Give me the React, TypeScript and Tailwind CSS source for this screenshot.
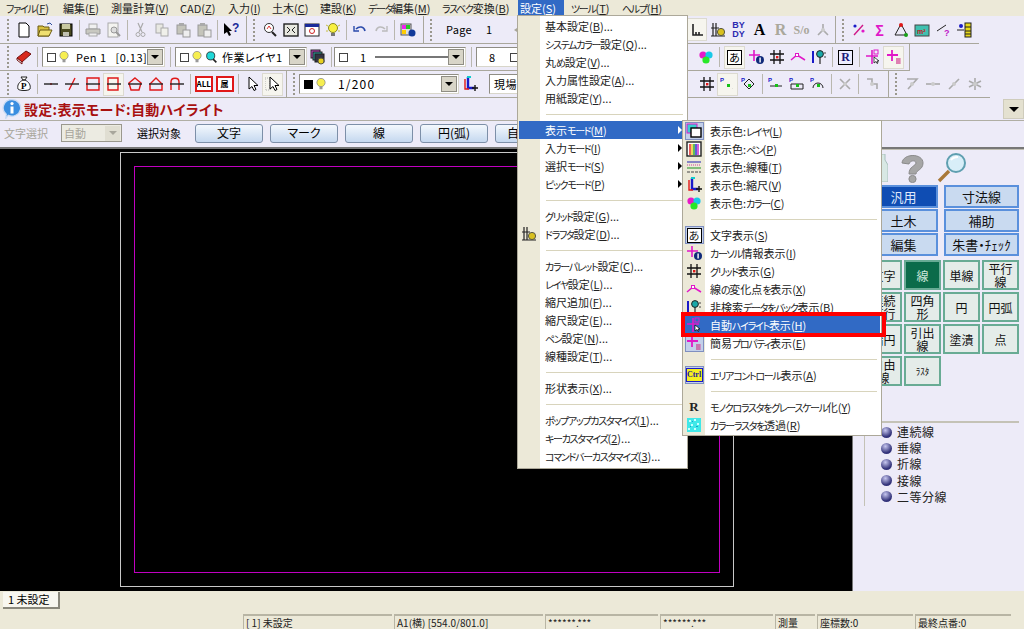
import type { ReactNode } from 'react'

const S = ({ children, size = 16 }: { children: ReactNode; size?: number }) => (
  <svg width={size} height={size} viewBox="0 0 16 16" className="shrink-0">
    {children}
  </svg>
)

const Btn = ({ children, active = false }: { children?: ReactNode; active?: boolean }) => (
  <div
    className={`w-[21px] h-[23px] shrink-0 flex items-center justify-center ${
      active ? 'bg-[#f6f5ee] border border-[#dcdad0]' : ''
    }`}
  >
    {children}
  </div>
)

const Sep = () => (
  <div className="w-[6px] h-[20px] shrink-0 flex justify-center">
    <div className="w-[1px] h-full bg-[#b9b7ae]" />
  </div>
)

const Grip = () => (
  <div className="w-[12px] h-[22px] shrink-0 flex justify-center">
    <div className="w-[2px] h-full border-l-2 border-dotted border-[#9a988e] ml-[1px]" />
  </div>
)

const Combo = ({ children, w }: { children: ReactNode; w: string }) => (
  <div
    className={`${w} h-[20px] shrink-0 flex items-center bg-white border border-[#8f8d84] border-b-[#d8d6ca] border-r-[#d8d6ca] text-[11px] tracking-[0.5px]`}
  >
    <div className="flex-1 flex items-center gap-[2px] pl-[4px] min-w-0 whitespace-nowrap overflow-hidden">{children}</div>
    <div className="w-[16px] h-[16px] mr-[1px] shrink-0 bg-[#d8d5c8] border border-[#8f8d84] flex items-center justify-center">
      <div className="w-0 h-0 border-x-[4px] border-x-transparent border-t-[4px] border-t-black" />
    </div>
  </div>
)

// toolbar glyphs
const Box = () => <div className="w-[9px] h-[9px] border border-[#444] bg-white shrink-0" />
const Bulb = () => (
  <S size={12}>
    <circle cx="8" cy="6" r="5.5" fill="#f6ee50" stroke="#888" />
    <rect x="6" y="11" width="4" height="4" fill="#999" />
  </S>
)
const New = () => <S><path d="M3 1h7l3 3v11H3z" fill="#fff" stroke="#000" /></S>
const Open = () => (
  <S>
    <path d="M1 4h5l1 1h5v9H1z" fill="#d8c040" stroke="#6a5a10" />
    <path d="M3 8h12l-3 6H1z" fill="#f0e070" stroke="#6a5a10" />
    <path d="M10 2l3-1 2 2" fill="none" stroke="#2a4a9a" />
  </S>
)
const Save = () => (
  <S>
    <rect x="2" y="2" width="12" height="12" fill="#4a4a20" stroke="#000" />
    <rect x="4" y="2" width="8" height="5" fill="#c8c8a0" />
    <rect x="5" y="10" width="6" height="4" fill="#c0c0b0" />
  </S>
)
const Print = () => (
  <S>
    <rect x="4" y="2" width="8" height="5" fill="#f0f0f0" stroke="#aaa" />
    <path d="M1 7h14v5H1z" fill="#c8c8c0" stroke="#999" />
    <rect x="4" y="11" width="8" height="3" fill="#eee" stroke="#aaa" />
  </S>
)
const Preview = () => (
  <S>
    <rect x="2" y="1" width="10" height="14" fill="#f4f4f0" stroke="#aaa" />
    <circle cx="8" cy="8" r="3" fill="#ddd" stroke="#999" />
    <path d="M10 10l4 4" stroke="#999" strokeWidth="2" />
  </S>
)
const Cut = () => (
  <S>
    <path d="M5 1l4 9M10 1L6 10" stroke="#aaa" strokeWidth="1.2" />
    <circle cx="5" cy="12.5" r="2" fill="none" stroke="#aaa" />
    <circle cx="10" cy="12.5" r="2" fill="none" stroke="#aaa" />
  </S>
)
const Copy = () => (
  <S>
    <rect x="2" y="2" width="7" height="9" fill="#e8e8e2" stroke="#aaa" />
    <rect x="7" y="6" width="7" height="8" fill="#f0f0ea" stroke="#aaa" />
  </S>
)
const Paste = ({ big = false }: { big?: boolean }) => (
  <S>
    <rect x="2" y="3" width="9" height={big ? 11 : 9} fill="#c4c4ba" stroke="#999" />
    <rect x="4" y="1" width="5" height="3" fill="#aaa" />
    <rect x="8" y="8" width="7" height="7" fill="#eee" stroke="#999" />
  </S>
)
const HelpArrow = () => (
  <S>
    <path d="M1 1v11l3-2 2 4 2-1-2-4h3z" fill="#000" />
    <text x="9" y="10" fontSize="12" fontWeight="700" fill="#1a2a9a" fontFamily="Liberation Sans">?</text>
  </S>
)
const ZoomIco = () => (
  <S>
    <circle cx="7" cy="6" r="4.5" fill="#fff" stroke="#333" />
    <path d="M5 7l2-3 2 3" fill="none" stroke="#d33" />
    <path d="M10 10l4 4" stroke="#222" strokeWidth="2" />
  </S>
)
const Fit = () => (
  <S>
    <rect x="1" y="2" width="14" height="12" fill="#e8e8e0" stroke="#222" strokeWidth="1.4" />
    <path d="M4 5l3 3-3 3M12 5L9 8l3 3" fill="none" stroke="#222" />
  </S>
)
const WinIco = () => (
  <S>
    <rect x="1" y="2" width="14" height="12" fill="#fff" stroke="#222" />
    <rect x="1" y="2" width="14" height="3" fill="#1a2a9a" />
    <circle cx="8" cy="9" r="2.5" fill="none" stroke="#c22" />
  </S>
)
const BigBulb = () => (
  <S>
    <circle cx="8" cy="6" r="4.5" fill="#f8f040" stroke="#8a8a20" />
    <rect x="6" y="11" width="4" height="3" fill="#777" />
    <path d="M1 3l2 1M15 3l-2 1M1 9h2M15 9h-2" stroke="#c8c040" />
  </S>
)
const Undo = () => (
  <S>
    <path d="M4 7c3-3 8-3 9 2" fill="none" stroke="#2a4aaa" strokeWidth="1.6" />
    <path d="M2 4v5h5" fill="none" stroke="#2a4aaa" strokeWidth="1.4" />
  </S>
)
const Redo = () => (
  <S>
    <path d="M12 7c-3-3-8-3-9 2" fill="none" stroke="#bbb" strokeWidth="1.6" />
    <path d="M14 4v5H9" fill="none" stroke="#bbb" strokeWidth="1.4" />
  </S>
)
const PalInfo = () => (
  <S>
    <rect x="1" y="2" width="10" height="11" fill="#ddd" stroke="#555" />
    <rect x="2" y="3" width="4" height="4" fill="#e2e" />
    <rect x="6" y="3" width="4" height="4" fill="#2c2" />
    <rect x="2" y="8" width="4" height="4" fill="#fc0" />
    <circle cx="12" cy="11" r="3.5" fill="#123a9a" />
  </S>
)
const Book = () => (
  <S>
    <path d="M1 9l9-7 5 3-9 8z" fill="#d8281c" stroke="#701010" />
    <path d="M1 9l5 4v2L1 11z" fill="#fff" stroke="#701010" />
  </S>
)
const Stack = () => (
  <S>
    <rect x="1" y="1" width="9" height="8" fill="#c040c0" stroke="#222" />
    <rect x="3" y="3" width="9" height="8" fill="#2a9a9a" stroke="#222" />
    <rect x="5" y="5" width="9" height="8" fill="#334" stroke="#222" />
    <circle cx="11" cy="12" r="3" fill="#e8d020" stroke="#554" />
  </S>
)
const PBag = () => (
  <S>
    <path d="M5 1h6l-2 3h-2zM7 4h2c4 2 6 5 5 9-1 2-11 2-12 0-1-4 1-7 5-9z" fill="#fff" stroke="#222" />
    <text x="5" y="13" fontSize="9" fontWeight="700" fontFamily="Liberation Serif">P</text>
  </S>
)
const L = ({ d }: { d: string }) => (
  <S>
    <path d={d} fill="none" stroke="#e01818" strokeWidth="1.4" />
    <path d="M1 8h14" stroke="#222" strokeWidth="1.4" />
  </S>
)
const Framed = ({ t }: { t: string }) => (
  <div className="w-[18px] h-[16px] border-2 border-[#e01818] bg-white text-[8px] leading-[12px] text-center font-bold overflow-hidden">
    {t}
  </div>
)
const Cursor = ({ grey = false }: { grey?: boolean }) => (
  <S>
    {grey && <rect x="0" y="2" width="5" height="12" fill="none" stroke="#aaa" strokeDasharray="1 1" />}
    <path d="M5 1v12l3-2.5 2 4 2-1-2-4h4z" fill="#fff" stroke="#000" />
  </S>
)
const ScaleIco = () => (
  <S>
    <path d="M6 1v11h6" fill="none" stroke="#1a1ac8" strokeWidth="2.4" />
    <path d="M3 3v10h4" fill="none" stroke="#e01818" strokeWidth="1.4" />
    <path d="M10 12h6M13 9v6" stroke="#111" strokeWidth="1.4" />
    <path d="M5 1h4" stroke="#1cc" strokeWidth="2" />
  </S>
)
const Circles = () => (
  <S>
    <circle cx="5" cy="6" r="3.6" fill="#e818c8" />
    <circle cx="11" cy="6" r="3.6" fill="#18c8e8" />
    <circle cx="8" cy="11" r="3.6" fill="#28e828" />
  </S>
)
const Aa = () => (
  <div className="w-[15px] h-[15px] border border-black bg-white text-[11px] leading-[13px] text-center">あ</div>
)
const CrossInfo = () => (
  <S>
    <path d="M6 1v11M1 6h11" stroke="#e018c8" strokeWidth="1.6" />
    <circle cx="12" cy="11" r="4" fill="#102a7a" />
    <rect x="11.4" y="8.5" width="1.4" height="5" fill="#fff" />
  </S>
)
const GridIco = ({ dot = true }: { dot?: boolean }) => (
  <S>
    <path d="M5 1v14M11 1v14M1 5h14M1 11h14" stroke="#111" strokeWidth="1.3" />
    {dot && <rect x="7" y="7" width="2.4" height="2.4" fill="#e01818" />}
  </S>
)
const Wave = () => (
  <S>
    <path d="M1 11l6-5 8 5" fill="none" stroke="#e018c8" strokeWidth="1.5" />
    <rect x="5.5" y="4.5" width="3" height="3" fill="#fff" stroke="#e018c8" />
  </S>
)
const Pin = () => (
  <S>
    <path d="M2 2v12" stroke="#1a1ac8" strokeWidth="2" />
    <path d="M9 7v8" stroke="#444" strokeWidth="1.4" />
    <circle cx="9" cy="5" r="3.4" fill="#18a8a8" stroke="#222" />
    <path d="M14 3v2M14 7v2" stroke="#444" />
  </S>
)
const RIco = () => (
  <div className="w-[15px] h-[15px] border border-black bg-[#eef] text-[12px] leading-[13px] text-center font-bold text-[#1a1a7a] font-['Liberation_Serif',serif]">
    R
  </div>
)
const AutoHi = () => (
  <S>
    <path d="M7 1v14M1 7h12" stroke="#e018c8" strokeWidth="1.6" />
    <rect x="9" y="1" width="4" height="4" fill="none" stroke="#e018c8" />
    <path d="M9 8v6l2-1.5 1 2 1-.5-1-2h2z" fill="#fff" stroke="#000" strokeWidth=".7" />
  </S>
)
const PropIco = () => (
  <S>
    <path d="M6 1v11M1 6h11" stroke="#e018c8" strokeWidth="1.8" />
    <path d="M10 10h5M10 12h5M10 14h5M11 9v6M13 9v6" stroke="#d04090" strokeWidth=".8" />
  </S>
)
const Ctrl = () => (
  <div className="w-[17px] h-[14px] bg-[#f4f020] border border-[#1a1ac8] text-[8px] leading-[12px] text-center font-bold text-[#1a1a9a] font-['Liberation_Serif',serif]">
    Ctrl
  </div>
)
const LayerIco = () => (
  <S>
    <rect x="1" y="1" width="10" height="9" fill="#38d0d0" stroke="#e018c8" />
    <rect x="5" y="5" width="10" height="9" fill="#fff" stroke="#000" strokeWidth="1.4" />
  </S>
)
const PenIco = () => (
  <S>
    <rect x="1" y="1" width="14" height="14" fill="#fff" stroke="#222" strokeWidth="1.4" />
    <path d="M4 3v11" stroke="#e01818" strokeWidth="1.4" />
    <path d="M6 3v11" stroke="#e8c018" strokeWidth="1.4" />
    <path d="M8 3v11" stroke="#18a018" strokeWidth="1.4" />
    <path d="M10 3v11" stroke="#1a1ac8" strokeWidth="1.4" />
    <path d="M12 3v11" stroke="#c018c8" strokeWidth="1.4" />
  </S>
)
const LineTypes = () => (
  <S>
    <path d="M1 3h14" stroke="#4444b8" strokeWidth="1.2" />
    <path d="M1 6h14" stroke="#d040a0" strokeWidth="1.2" strokeDasharray="1 1" />
    <path d="M1 9h14" stroke="#40a040" strokeWidth="1.2" />
    <path d="M1 13h14" stroke="#444" strokeWidth="1.2" strokeDasharray="3 1" />
  </S>
)
const Noise = () => (
  <S>
    <rect x="1" y="1" width="14" height="14" fill="#40e8e8" />
    <path d="M3 3h2v2H3zM8 2h2v2H8zM5 7h2v2H5zM11 6h2v2h-2zM2 11h2v2H2zM8 11h2v2H8z" fill="#c8ffff" />
    <path d="M6 4h1v1H6zM10 9h2v1h-2zM4 9h1v1H4z" fill="#18a0d0" />
  </S>
)
const Draft = () => (
  <S>
    <path d="M3 1v13M1 6h8M6 1v13M1 14h14" stroke="#222" strokeWidth="1.2" />
    <circle cx="11" cy="10" r="3.6" fill="#d8c020" stroke="#554" />
  </S>
)
const Snap = ({ d }: { d: string }) => (
  <S>
    <text x="0" y="6" fontSize="6" fill="#1a1ac8" fontFamily="Liberation Sans" fontWeight="700">P</text>
    <path d={d} fill="none" stroke="#222" />
    <rect x="7" y="8" width="3" height="3" fill="#18c018" />
  </S>
)
const Faded = ({ d }: { d: string }) => (
  <S>
    <path d={d} fill="none" stroke="#aaa" strokeWidth="1.6" />
    <circle cx="8" cy="8" r="2" fill="#ccc" />
  </S>
)
const Tools = ({ c, d }: { c: string; d: string }) => (
  <S>
    <path d={d} fill="none" stroke={c} strokeWidth="1.4" />
    <circle cx="4" cy="4" r="1.6" fill="#1a1ac8" />
    <circle cx="12" cy="9" r="1.6" fill="#e018c8" />
  </S>
)

// the original UI font has narrow kana, so kana runs get set tighter than kanji
const Mn = ({ t, k, s = '' }: { t: string; k: string; s?: string }) => (
  <>
    {t.split(/([ァ-ヶーぁ-ん]+)/).map((part, i) =>
      i % 2 ? (
        <span key={i} className="text-[10px] tracking-[-1.3px]">
          {part}
        </span>
      ) : (
        part
      )
    )}
    (<u>{k}</u>){s}
  </>
)

const menuBar: [string, string, string][] = [
  ['ファイル', 'F', 'ml-[6px] w-[57px]'],
  ['編集', 'E', 'w-[48px]'],
  ['測量計算', 'V', 'w-[69px]'],
  ['CAD', 'Z', 'w-[48px]'],
  ['入力', 'I', 'w-[44px]'],
  ['土木', 'C', 'w-[48px]'],
  ['建設', 'K', 'w-[48px]'],
  ['データ編集', 'M', 'w-[74px]'],
  ['ラスベク変換', 'B', 'w-[75px]'],
]

type Row =
  | { sep: true }
  | { t: string; k: string; s?: string; icon?: ReactNode; arrow?: boolean; hi?: boolean; boxed?: boolean }

const settingsMenu: Row[] = [
  { t: '基本設定', k: 'B', s: '...' },
  { t: 'システムカラー設定', k: 'Q', s: '...' },
  { t: '丸め設定', k: 'V', s: '...' },
  { t: '入力属性設定', k: 'A', s: '...' },
  { t: '用紙設定', k: 'Y', s: '...' },
  { sep: true },
  { t: '表示モード', k: 'M', arrow: true, hi: true },
  { t: '入力モード', k: 'I', arrow: true },
  { t: '選択モード', k: 'S', arrow: true },
  { t: 'ピックモード', k: 'P', arrow: true },
  { sep: true },
  { t: 'グリッド設定', k: 'G', s: '...' },
  { t: 'ドラフタ設定', k: 'D', s: '...', icon: <Draft /> },
  { sep: true },
  { t: 'カラーパレット設定', k: 'C', s: '...' },
  { t: 'レイヤ設定', k: 'L', s: '...' },
  { t: '縮尺追加', k: 'F', s: '...' },
  { t: '縮尺設定', k: 'E', s: '...' },
  { t: 'ペン設定', k: 'N', s: '...' },
  { t: '線種設定', k: 'T', s: '...' },
  { sep: true },
  { t: '形状表示', k: 'X', s: '...' },
  { sep: true },
  { t: 'ポップアップカスタマイズ', k: '1', s: '...' },
  { t: 'キーカスタマイズ', k: '2', s: '...' },
  { t: 'コマンドバーカスタマイズ', k: '3', s: '...' },
]

const displayMenu: Row[] = [
  { t: '表示色:レイヤ', k: 'L', icon: <LayerIco />, boxed: true },
  { t: '表示色:ペン', k: 'P', icon: <PenIco /> },
  { t: '表示色:線種', k: 'T', icon: <LineTypes /> },
  { t: '表示色:縮尺', k: 'V', icon: <ScaleIco /> },
  { t: '表示色:カラー', k: 'C', icon: <Circles /> },
  { sep: true },
  { t: '文字表示', k: 'S', icon: <Aa />, boxed: true },
  { t: 'カーソル情報表示', k: 'I', icon: <CrossInfo /> },
  { t: 'グリッド表示', k: 'G', icon: <GridIco /> },
  { t: '線の変化点を表示', k: 'X', icon: <Wave /> },
  { t: '非検索データをバック表示', k: 'B', icon: <Pin /> },
  { t: '自動ハイライト表示', k: 'H', icon: <AutoHi />, hi: true },
  { t: '簡易プロパティ表示', k: 'E', icon: <PropIco />, boxed: true },
  { sep: true },
  { t: 'エリアコントロール表示', k: 'A', icon: <Ctrl />, boxed: true },
  { sep: true },
  { t: 'モノクロラスタをグレースケール化', k: 'Y', icon: <span className="font-bold text-[13px] font-['Liberation_Serif',serif]">R</span> },
  { t: 'カラーラスタを透過', k: 'R', icon: <Noise /> },
]

function PopMenu({ rows, className }: { rows: Row[]; className: string }) {
  return (
    <div className={`absolute z-10 bg-white border border-[#aca899] py-[1px] text-[11px] text-[#222] ${className}`}>
      <div className="absolute left-0 top-0 bottom-0 w-[22px] bg-[#ece9d8]" />
      {rows.map((r, i) =>
        'sep' in r ? (
          <div key={i} className="relative h-[14px] pl-[28px] pr-[4px] pt-[7px]">
            <div className="h-[1px] bg-[#d8d4bc]" />
          </div>
        ) : (
          <div
            key={i}
            className={`relative h-[18px] mx-[1px] flex items-center whitespace-nowrap ${
              r.hi ? 'bg-[#316ac5] text-white' : ''
            }`}
          >
            <div className="w-[20px] h-[18px] flex items-center justify-center shrink-0">
              {r.icon && (
                <div
                  className={`w-[19px] h-[18px] flex items-center justify-center ${
                    r.boxed ? 'bg-[#c3d0ea] border border-[#7f8fc0]' : ''
                  }`}
                >
                  {r.icon}
                </div>
              )}
            </div>
            <span className="ml-[6px]">
              <Mn t={r.t} k={r.k} s={r.s} />
            </span>
            {r.arrow && (
              <div
                className={`absolute right-[4px] w-0 h-0 border-y-[4px] border-y-transparent border-l-[4px] ${
                  r.hi ? 'border-l-white' : 'border-l-black'
                }`}
              />
            )}
          </div>
        )
      )}
    </div>
  )
}

const BlueBtn = ({ t, active = false }: { t: string; active?: boolean }) => (
  <div
    className={`h-[23px] flex items-center justify-center text-[13px] border-2 border-[#5a90dc] ${
      active ? 'bg-[#0f4db3] border-[#0f4db3] text-[#dfe8fa]' : 'bg-[#c9daf0] text-[#111]'
    }`}
  >
    {t}
  </div>
)

const GreenBtn = ({ t, active = false, small = false }: { t: string; active?: boolean; small?: boolean }) => (
  <div
    className={`h-[30px] flex items-center justify-center text-center leading-[13px] border-2 border-[#68ab94] ${
      small ? 'text-[9px]' : 'text-[12px]'
    } ${active ? 'bg-[#0b6b4a] border-[#0b6b4a] text-[#cfe8dc]' : 'bg-[#e4ece9] text-[#111]'}`}
  >
    {t}
  </div>
)

const SelBtn = ({ t, left = false }: { t: string; left?: boolean }) => (
  <div
    className={`w-[68px] h-[19px] shrink-0 rounded-[3px] border border-[#7d8fa8] bg-gradient-to-b from-[#f4f8fd] to-[#c5d8ef] flex items-center text-[12px] ${
      left ? 'justify-start pl-[11px]' : 'justify-center'
    }`}
  >
    {t}
  </div>
)

const Pane = ({ w, children }: { w: string; children: ReactNode }) => (
  <div className={`${w} h-[15px] shrink-0 border-t-2 border-l border-[#b8b5a4] pl-[2px] text-[10px] leading-[14px] whitespace-nowrap overflow-hidden text-[#222]`}>
    {children}
  </div>
)

export default function App() {
  return (
    <div className="relative w-[1024px] h-[629px] overflow-hidden flex flex-col bg-[#edebf8] text-black font-['Noto_Sans_CJK_JP','Liberation_Sans',sans-serif] [font-feature-settings:'palt']">
      {/* menu bar */}
      <div className="h-[16px] shrink-0 bg-[#ece9d8] flex items-center text-[11px] text-[#222] whitespace-nowrap">
        {menuBar.map(([t, k, w]) => (
          <span key={t} className={w}>
            <Mn t={t} k={k} />
          </span>
        ))}
        <span className="w-[46px] h-[16px] ml-[1px] pl-[2px] bg-[#316ac5] text-white leading-[16px]">
          <Mn t="設定" k="S" />
        </span>
        <span className="w-[51px] ml-[7px]">
          <Mn t="ツール" k="T" />
        </span>
        <span>
          <Mn t="ヘルプ" k="H" />
        </span>
      </div>

      {/* toolbar 1 */}
      <div className="h-[28px] shrink-0 flex items-center">
        <div className="w-[979px] h-full flex items-center border-b border-[#a9a79c]">
          <div className="w-[247px] h-full flex items-center border-r border-[#a9a79c] pl-[1px]">
            <Grip />
            <Btn><New /></Btn>
            <Btn><Open /></Btn>
            <Btn><Save /></Btn>
            <Sep />
            <Btn><Print /></Btn>
            <Btn><Preview /></Btn>
            <Sep />
            <Btn><Cut /></Btn>
            <Btn><Copy /></Btn>
            <Btn><Paste /></Btn>
            <Btn><Paste big /></Btn>
            <Sep />
            <Btn><HelpArrow /></Btn>
          </div>
          <div className="w-[177px] h-full flex items-center border-r border-[#a9a79c]">
            <Grip />
            <Btn><ZoomIco /></Btn>
            <Btn><Fit /></Btn>
            <Btn><WinIco /></Btn>
            <Btn><BigBulb /></Btn>
            <Sep />
            <Btn><Undo /></Btn>
            <Btn><Redo /></Btn>
            <Sep />
            <Btn><PalInfo /></Btn>
          </div>
          <div className="w-[412px] h-full flex items-center justify-between border-r border-[#a9a79c] pr-[2px]">
            <div className="flex items-center text-[11px] tracking-[0.3px]">
              <Grip />
              <span className="ml-[10px]">Page</span>
              <span className="ml-[14px]">1</span>
              <div className="ml-[22px] w-0 h-0 border-y-[6px] border-y-transparent border-r-[9px] border-r-[#a8a698]" />
            </div>
            <div className="flex items-center">
              <Btn active>
                <S><path d="M4 2v11h10M7 13v-3M10 13v-3" fill="none" stroke="#222" strokeWidth="1.6" /></S>
              </Btn>
              <Btn><Draft /></Btn>
              <Btn>
                <span className="text-[9px] leading-[9px] text-[#2a2ab0] font-bold font-['Liberation_Sans',sans-serif] text-center">BY<br />DY</span>
              </Btn>
              <Btn><span className="font-bold text-[16px] font-['Liberation_Serif',serif]">A</span></Btn>
              <Btn><span className="font-bold text-[16px] text-[#aaa89c] font-['Liberation_Serif',serif]">R</span></Btn>
              <Btn><span className="font-bold text-[12px] text-[#aaa89c] font-['Liberation_Serif',serif]">S/o</span></Btn>
              <Btn><Faded d="M8 2v6M3 13l5-5 5 5" /></Btn>
            </div>
          </div>
          <div className="flex-1 h-full flex items-center">
            <Grip />
            <Btn><Tools c="#d01888" d="M3 13L12 3" /></Btn>
            <Btn>
              <span className="text-[14px] font-bold text-[#e018c8] leading-none">Σ</span>
            </Btn>
            <Btn><S><path d="M8 2L2 13h12z" fill="none" stroke="#222" /><circle cx="8" cy="3" r="2" fill="#e01818" /><circle cx="13" cy="13" r="2" fill="#18a018" /></S></Btn>
            <Btn><S><rect x="1" y="3" width="14" height="11" fill="#40c0b0" stroke="#444" /><text x="3" y="12" fontSize="7" fill="#c01818" fontWeight="700" fontFamily="Liberation Sans">m²</text></S></Btn>
            <Btn><S><path d="M2 9l9-6" stroke="#222" /><text x="9" y="14" fontSize="9" fontWeight="700" fill="#c018c8" fontFamily="Liberation Sans">?</text></S></Btn>
            <Btn><S><rect x="9" y="1" width="6" height="14" fill="#e8d818" stroke="#222" /><path d="M9 5h6M9 9h6M9 12h6M1 8h7" stroke="#222" /><circle cx="5" cy="4" r="2" fill="#1a1ac8" /></S></Btn>
          </div>
        </div>
      </div>

      {/* toolbar 2 */}
      <div className="h-[27px] shrink-0 flex">
        <div className="w-[910px] h-full flex items-center justify-between border-b border-r border-[#a9a79c] pl-[1px] pr-[5px]">
          <div className="flex items-center">
            <Grip />
            <Btn><Book /></Btn>
            <Sep />
            <div className="ml-[2px]">
              <Combo w="w-[123px]">
                <Box /><Bulb />
                <span className="ml-[4px]">Pen 1 &nbsp;&nbsp;[0.13]</span>
              </Combo>
            </div>
            <div className="mx-[2px]"><Sep /></div>
            <Combo w="w-[132px]">
              <Box /><Bulb />
              <S size={13}><circle cx="7" cy="6" r="5" fill="#20d8d8" stroke="#222" /><path d="M10 10l4 4" stroke="#222" strokeWidth="2" /></S>
              <span className="ml-[2px]">作業レイヤ1</span>
            </Combo>
            <Btn><Stack /></Btn>
            <Sep />
            <Combo w="w-[132px]">
              <Box />
              <span className="ml-[10px]">1</span>
              <div className="ml-[6px] w-[78px] h-[2px] bg-[#777]" />
            </Combo>
            <div className="mx-[2px]"><Sep /></div>
            <Combo w="w-[100px]">
              <span className="ml-[8px]">8</span>
              <div className="ml-[12px]"><Box /></div>
            </Combo>
          </div>
          <div className="flex items-center">
            <Btn><Circles /></Btn>
            <Sep />
            <div className="ml-[2px]"><Btn active><Aa /></Btn></div>
            <Btn><CrossInfo /></Btn>
            <Btn><GridIco /></Btn>
            <Btn><Wave /></Btn>
            <Btn><Pin /></Btn>
            <Sep />
            <Btn><RIco /></Btn>
            <Sep />
            <Btn><AutoHi /></Btn>
            <Btn active><PropIco /></Btn>
          </div>
        </div>
      </div>

      {/* toolbar 3 */}
      <div className="h-[27px] shrink-0 flex">
        <div className="w-[287px] h-full flex items-center border-b border-r border-[#a9a79c] pl-[1px]">
          <Grip />
          <Btn><PBag /></Btn>
          <Sep />
          <Btn><L d="M7 8h2" /></Btn>
          <Btn><L d="M11 2L5 14" /></Btn>
          <Btn><L d="M2 2h12v12H2z" /></Btn>
          <Btn active><L d="M2 2h10v12H2zM2 2" /></Btn>
          <Btn><L d="M8 2l6 5-2 7H4L2 7z" /></Btn>
          <Btn><L d="M8 2l6 6v6H2V8z" /></Btn>
          <Btn><L d="M2 14V6c0-5 8-5 8 0v8" /></Btn>
          <Sep />
          <Btn><Framed t="ALL" /></Btn>
          <Btn><Framed t="属" /></Btn>
          <Sep />
          <Btn><Cursor /></Btn>
          <Btn active><Cursor grey /></Btn>
        </div>
        <div className="w-[602px] h-full flex items-center justify-between border-b border-r border-[#a9a79c] pr-[6px]">
          <div className="flex items-center">
            <Grip />
            <Combo w="w-[160px]">
              <div className="w-[9px] h-[9px] bg-black shrink-0" />
              <Bulb />
              <span className="ml-[9px] text-[12px] tracking-[1.2px]">1/200</span>
            </Combo>
            <Btn><ScaleIco /></Btn>
            <div className="ml-[9px]">
              <Combo w="w-[120px]">
                <span>現場</span>
              </Combo>
            </div>
          </div>
          <div className="flex items-center">
            <Btn><GridIco /></Btn>
            <Btn active><Snap d="M12 12l.1.1" /></Btn>
            <Btn><Snap d="M8 3l5 5-5 5-5-5z" /></Btn>
            <Sep />
            <Btn><Snap d="M2 10h12" /></Btn>
            <Btn><Snap d="M2 8h12M2 8v5h12V8" /></Btn>
            <Btn><Snap d="M3 12a5 5 0 1 1 10 0" /></Btn>
            <Sep />
            <Btn><Faded d="M3 3l10 10M13 3L3 13" /></Btn>
            <Sep />
            <Btn><Faded d="M3 3h5v5h5v5" /></Btn>
          </div>
        </div>
        <div className="w-[101px] h-full flex items-center border-b border-[#a9a79c]">
          <Grip />
          <Btn><Faded d="M3 3h10L4 13" /></Btn>
          <Btn><Faded d="M1 8h14" /></Btn>
          <Btn><Faded d="M3 13L13 3" /></Btn>
          <Btn><Faded d="M8 2v12M2 5l12 6M14 5L2 11" /></Btn>
        </div>
      </div>

      {/* title */}
      <div className="h-[23px] shrink-0 flex items-center border-b border-[#b0aea4] pl-[2px] relative">
        <S size={20}>
          <path d="M8 .5a7 6.6 0 1 1-3 12.6L3 15.5l.4-3.4A7 6.6 0 0 1 8 .5z" fill="#3a8ee0" stroke="#ccdcf4" />
          <circle cx="8" cy="3.6" r="1.3" fill="#fff" />
          <rect x="6.8" y="6" width="2.4" height="5.6" fill="#fff" />
        </S>
        <span className="ml-[2px] text-[14px] font-bold text-[#a81010] leading-none whitespace-nowrap tracking-[0.3px]">
          設定:表示モード:自動ハイライト
        </span>
        <div className="absolute right-0 top-[1px] w-[21px] h-[20px] bg-[#e4e1d0] border border-[#cfccbc] flex items-center justify-center">
          <div className="w-0 h-0 border-x-[5px] border-x-transparent border-t-[5px] border-t-black" />
        </div>
      </div>

      {/* selection options */}
      <div className="h-[28px] shrink-0 flex items-center pb-[2px] text-[11px] border-b-2 border-[#777]">
        <span className="ml-[4px] w-[57px] text-[#a8a69c]">文字選択</span>
        <div className="w-[61px] h-[18px] border border-[#9a988e] bg-[#ecebe2] flex items-center text-[#a8a69c] pl-[2px]">
          <span className="flex-1">自動</span>
          <div className="w-[15px] h-[15px] mr-[1px] bg-[#e0ded2] flex items-center justify-center">
            <div className="w-0 h-0 border-x-[4px] border-x-transparent border-t-[4px] border-t-[#a8a69c]" />
          </div>
        </div>
        <span className="ml-[15px] w-[58px]">選択対象</span>
        <div className="flex gap-[7px]">
          <SelBtn t="文字" />
          <SelBtn t="マーク" />
          <SelBtn t="線" />
          <SelBtn t="円(弧)" />
          <SelBtn t="自" left />
        </div>
      </div>

      {/* canvas + right panel */}
      <div className="h-[442px] shrink-0 flex">
        <div className="w-[853px] h-full bg-black pl-[120px] pr-[118px] pt-[3px] pb-[4px] border-r border-[#777]">
          <div className="h-full border border-[#c8c8c8] p-[13px]">
            <div className="h-full border border-[#c000c0]" />
          </div>
        </div>
        <div className="flex-1 border-t border-[#c0beb2] pl-[12px] pr-[5px]">
          <div className="h-[35px] flex items-center pl-[10px] gap-[9px]">
            <svg width="13" height="28" viewBox="0 0 13 28">
              <path d="M3 0h7v6l3 5v17H0V11l3-5z" fill="#d8e8e4" stroke="#a8c0bc" />
            </svg>
            <svg width="30" height="30" viewBox="0 0 30 30">
              <path d="M5 10C6 0 26 0 26 10c0 7-7 7-7 11h-7c0-8 7-8 7-11 0-3-6-3-7 1z" fill="#a6a6a6" stroke="#8a8a8a" />
              <circle cx="15.5" cy="26" r="3.6" fill="#a6a6a6" stroke="#8a8a8a" />
            </svg>
            <svg width="32" height="32" viewBox="0 0 32 32">
              <path d="M13 19L3 29" stroke="#a87838" strokeWidth="3.4" />
              <circle cx="20" cy="11" r="9" fill="#d8eef8" stroke="#5f9fb0" strokeWidth="2" />
              <path d="M15 8c2-3 5-3 7-3" stroke="#fff" strokeWidth="2" fill="none" />
            </svg>
          </div>
          <div className="grid grid-cols-[69px_75px] gap-x-[6px] gap-y-[1px] ml-[4px]">
            <BlueBtn t="汎用" active />
            <BlueBtn t="寸法線" />
            <BlueBtn t="土木" />
            <BlueBtn t="補助" />
            <BlueBtn t="編集" />
            <BlueBtn t="朱書・ﾁｪｯｸ" />
          </div>
          <div className="grid grid-cols-[37px_37px_37px_37px] gap-x-[2px] gap-y-[2px] mt-[4px]">
            <GreenBtn t="文字" />
            <GreenBtn t="線" active />
            <GreenBtn t="単線" />
            <GreenBtn t="平行線" />
            <GreenBtn t="連続直行" />
            <GreenBtn t="四角形" />
            <GreenBtn t="円" />
            <GreenBtn t="円弧" />
            <GreenBtn t="楕円" />
            <GreenBtn t="引出線" />
            <GreenBtn t="塗潰" />
            <GreenBtn t="点" />
            <GreenBtn t="自由線" />
            <GreenBtn t="ﾗｽﾀ" small />
          </div>
          <div className="mt-[35px] -ml-[1px] h-[85px] border-t-2 border-l border-[#c4c2b6] pt-[1px] pl-[16px]">
            {['連続線', '垂線', '折線', '接線', '二等分線'].map((t) => (
              <div key={t} className="h-[16.2px] flex items-center text-[12px] tracking-[0.5px] text-[#222]">
                <div className="w-[11px] h-[11px] rounded-full bg-[radial-gradient(circle_at_40%_30%,#c8c8f0,#33337a_65%)] mr-[5px]" />
                {t}
              </div>
            ))}
          </div>
        </div>
      </div>

      {/* tabs and status */}
      <div className="flex-1 bg-[#ece9d8] flex flex-col">
        <div className="h-[23px] pl-[3px] pt-[1px]">
          <div className="w-[57px] h-[17px] bg-[#f8f7f0] border-r-2 border-b-2 border-[#8a887c] text-[11px] leading-[15px] pl-[5px] whitespace-nowrap">
            1 未設定
          </div>
        </div>
        <div className="h-[15px] flex pl-[243px] gap-[2px]">
          <Pane w="w-[149px]">[ 1] 未設定</Pane>
          <Pane w="w-[149px]">A1(横) [554.0/801.0]</Pane>
          <Pane w="w-[113px]">******.***</Pane>
          <Pane w="w-[113px]">******.***</Pane>
          <Pane w="w-[40px]">測量</Pane>
          <Pane w="w-[96px]">座標数:0</Pane>
          <Pane w="w-[96px]">最終点番:0</Pane>
        </div>
      </div>

      {/* open menus */}
      <PopMenu rows={settingsMenu} className="left-[517px] top-[15px] w-[171px] h-[454px]" />
      <PopMenu rows={displayMenu} className="left-[682px] top-[120px] w-[200px] h-[316px]" />

      {/* callout round the highlighted item */}
      <div className="absolute z-20 left-[681px] top-[312px] w-[205px] h-[25px] border-4 border-[#ff0000]" />
    </div>
  )
}
